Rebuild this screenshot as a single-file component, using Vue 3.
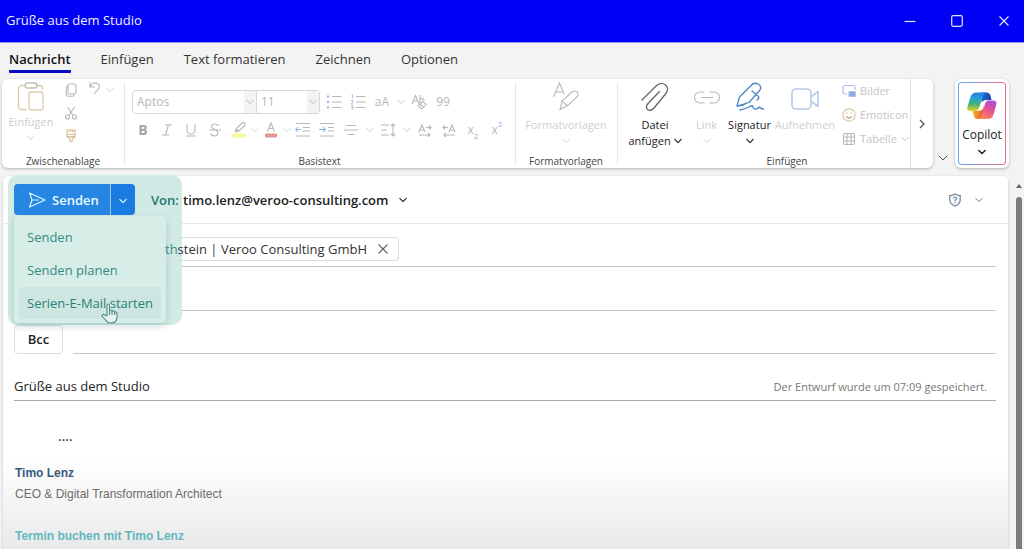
<script setup>
import { h, ref } from 'vue'

const Chevron = (props) =>
  h('svg', { width: props.size || 8, height: props.size || 8, viewBox: '0 0 10 10', fill: 'none', stroke: 'currentColor', 'stroke-width': props.weight || 1.2, 'stroke-linecap': 'round', 'stroke-linejoin': 'round', 'aria-hidden': 'true' }, [
    h('path', { d: 'M1 3l4 4 4-4' }),
  ])
Chevron.props = ['size', 'weight']

const tabs = ['Nachricht', 'Einfügen', 'Text formatieren', 'Zeichnen', 'Optionen']
const menu = ['Senden', 'Senden planen', 'Serien-E-Mail starten']
const active = ref('Nachricht')
const subject = ref('Grüße aus dem Studio')
</script>

<template>
  <div class="window">
    <header class="titlebar">
      <h1>Grüße aus dem Studio</h1>
      <div class="controls">
        <button aria-label="Minimieren"><svg width="12" height="12" viewBox="0 0 12 12"><path d="M0.5 6.5h11" /></svg></button>
        <button aria-label="Maximieren"><svg width="12" height="12" viewBox="0 0 12 12"><rect x="0.7" y="0.7" width="10.6" height="10.6" rx="1.5" /></svg></button>
        <button aria-label="Schließen"><svg width="12" height="12" viewBox="0 0 12 12"><path d="M1.5 1.5l9 9M10.5 1.5l-9 9" /></svg></button>
      </div>
    </header>

    <nav class="tabs">
      <button v-for="t in tabs" :key="t" :class="{ on: t === active }" @click="active = t">{{ t }}</button>
    </nav>

    <div class="ribbon-row">
      <div class="ribbon">
        <div class="groups">
          <section class="group clipboard">
            <div class="tools">
              <button class="big faded" disabled>
                <svg width="28" height="30" viewBox="0 0 28 30" fill="none" stroke="#dccfae" stroke-width="1.3">
                  <path d="M8.500 3.500H4.500a3 3 0 0 0-3 3v18a3 3 0 0 0 3 3H10M19.500 3.500h3a3 3 0 0 1 3 3V8" />
                  <rect x="8" y="1" width="12" height="5" rx="2.500" stroke="#bdbdbd" />
                  <rect x="12" y="10" width="14" height="18" rx="2.500" />
                </svg>
                <span>Einfügen</span>
                <Chevron />
              </button>
              <div class="minis">
                <button aria-label="Kopieren"><svg width="14" height="14" viewBox="0 0 14 14" class="line"><rect x="4" y="1" width="8" height="10" rx="1.500" /><path d="M4 3c-1.300 0-1.800.7-1.800 1.800V11c0 1.500.8 2.200 2.200 2.200h4c1.100 0 1.800-.7 1.800-2" /></svg></button>
                <button aria-label="Ausschneiden"><svg width="14" height="14" viewBox="0 0 14 14" class="line"><path d="M3.500 1l5.700 8.500M10.500 1L4.800 9.500" /><circle cx="3.500" cy="11" r="2" /><circle cx="10.500" cy="11" r="2" /></svg></button>
                <button aria-label="Format übertragen"><svg width="14" height="14" viewBox="0 0 14 14" fill="none" stroke="#d3bd92" stroke-width="1.200"><path d="M3 1h8v6.500H3zM3 5.500h8M6 1v2M8.500 1v2.500M3 7.500q0 1.500 2.800 1.500v3q1.200 1.600 2.400 0V9q2.800 0 2.800-1.500" /></svg></button>
              </div>
              <div class="undo">
                <button aria-label="Rückgängig"><svg width="14" height="14" viewBox="0 0 14 14" class="line"><path d="M2 1v5h5M2 6c2-4 5-5 7.500-3.500s2.500 4.500.5 6L6 13" /></svg></button>
                <Chevron />
              </div>
            </div>
            <h2>Zwischenablage</h2>
          </section>

          <section class="group basic">
            <div class="rows">
              <div class="row">
                <div class="combo">
                  <select aria-label="Schriftart"><option>Aptos</option></select><span class="arrow"><Chevron /></span>
                </div>
                <div class="combo size">
                  <select aria-label="Schriftgrad"><option>11</option></select><span class="arrow"><Chevron /></span>
                </div>
                <button class="t first" aria-label="Aufzählung"><svg width="16" height="16" viewBox="0 0 16 16" class="line"><path d="M6 2.500h9.500M6 8h9.500M6 13.500h9.500" /><path d="M1 2.500h2M1 8h2M1 13.500h2" stroke="#8fb2dc" stroke-width="2" /></svg></button>
                <button class="t" aria-label="Nummerierung"><svg width="16" height="16" viewBox="0 0 16 16" class="line"><path d="M6 2.500h9.500M6 8h9.500M6 13.500h9.500" /><path d="M1.500 1.500l1-1v4M1 6.500h2v1.500L1 10h2M1 12h2v3H1M1.500 13.500H3" stroke="#a5c0e2" stroke-width=".9" /></svg></button>
                <button class="t glyph">aA</button>
                <i class="chev wide"><Chevron /></i>
                <button class="t" aria-label="Formatierung löschen"><svg width="16" height="16" viewBox="0 0 16 16" class="line"><path d="M1 10l3.500-8.500L8 10M2.200 7h4.600M9 1v8M9 5.500c2-2 4.500-.7 4 1.500" /><path d="M7.500 11.500l4-4 3.500 3-3.500 4H9.500zM9 10l3.500 3" /></svg></button>
                <button class="t glyph">99</button>
              </div>
              <div class="row">
                <button class="t glyph bold">B</button>
                <button class="t" aria-label="Kursiv"><svg width="12" height="12" viewBox="0 0 12 12" class="line"><path d="M4 1h7M1 11h7M7.500 1l-3 10" /></svg></button>
                <button class="t" aria-label="Unterstrichen"><svg width="12" height="14" viewBox="0 0 12 14" class="line"><path d="M2 1v6a4 4 0 0 0 8 0V1M1 13h10" /></svg></button>
                <button class="t" aria-label="Durchgestrichen"><svg width="12" height="14" viewBox="0 0 12 14" class="line"><path d="M9.500 3C8-.2 2.800.8 2.500 3.500 2.500 6 6 6 8 8c2 2 .5 5-2.500 5-2 0-3.300-1-3.800-2.500M0 7h12" /></svg></button>
                <button class="t" aria-label="Texthervorhebung"><svg width="16" height="16" viewBox="0 0 16 16" class="line"><rect x="1" y="11.500" width="14" height="4" fill="#fbf79b" stroke="none" /><path d="M4 10l1-3 6-6q1.500-1 2.500 0t0 2.500l-6 6-3.500.5M5 7l3 2.500" /></svg></button>
                <i class="chev"><Chevron /></i>
                <button class="t" aria-label="Schriftfarbe"><svg width="14" height="16" viewBox="0 0 14 16" class="line"><rect x="1" y="11.500" width="12" height="4" rx="1" fill="#dd9896" stroke="none" /><path d="M3.500 9.500L7 1l3.500 8.500M4.800 6.500h4.400" /></svg></button>
                <i class="chev"><Chevron /></i>
                <button class="t" aria-label="Einzug verkleinern"><svg width="16" height="16" viewBox="0 0 16 16" class="line"><path d="M1 1.500h14M8 5.500h7M8 9h7M1 14h14" /><path d="M6 7.500H1M3 5L.7 7.500 3 10" stroke="#8fb2dc" /></svg></button>
                <button class="t" aria-label="Einzug vergrößern"><svg width="16" height="16" viewBox="0 0 16 16" class="line"><path d="M1 1.500h14M9 5.500h6M9 9h6M1 14h14" /><path d="M0 7.500h6M4 5l2.300 2.500L4 10" stroke="#8fb2dc" /></svg></button>
                <button class="t" aria-label="Ausrichtung"><svg width="14" height="14" viewBox="0 0 14 14" class="line"><path d="M2 2.500h10M0 7h14M3.500 11.500h7" /></svg></button>
                <i class="chev wide"><Chevron /></i>
                <button class="t" aria-label="Zeilenabstand"><svg width="16" height="16" viewBox="0 0 16 16" class="line"><path d="M1 3h8M1 8h6M1 13h8M13 2v12M11 4l2-2 2 2M11 12l2 2 2-2" /></svg></button>
                <i class="chev wide"><Chevron /></i>
                <button class="t" aria-label="Von links nach rechts"><svg width="14" height="14" viewBox="0 0 14 14" class="line"><path d="M1 9l3-7 3 7M2 7h4M8 4.500h5M11 2.500l2 2-2 2M1 12h11M10 10l2 2-2 2" /></svg></button>
                <button class="t" aria-label="Von rechts nach links"><svg width="14" height="14" viewBox="0 0 14 14" class="line"><path d="M7 9l3-7 3 7M8 7h4M6 4.500H1M3 2.500l-2 2 2 2M13 12H2M4 10l-2 2 2 2" /></svg></button>
                <button class="t glyph">x<sub>2</sub></button>
                <button class="t glyph">x<sup>2</sup></button>
              </div>
            </div>
            <h2>Basistext</h2>
          </section>

          <section class="group styles">
            <div class="tools">
              <button class="big faded" disabled>
                <svg width="28" height="30" viewBox="0 0 28 30" class="line"><path d="M1.500 15L7.500 1l4.500 11M3.800 10h7M8 27.500l2-8.500 10-9q3-2 5 0t0 5l-10 9zM10 19l5 4.500" /></svg>
                <span>Formatvorlagen</span>
                <Chevron />
              </button>
            </div>
            <h2>Formatvorlagen</h2>
          </section>

          <section class="group insert">
            <div class="tools">
              <button class="big attach">
                <svg width="28" height="30" viewBox="0 0 28 30" fill="none" stroke="#666" stroke-width="1.300" stroke-linecap="round"><path d="M1 18L14.500 4.500c3-3 7-4 10-1.500s2.500 6 0 9L13 26c-2 2.500-5 3-6.500 1.500s-1.200-4 .5-6L18.500 9.500" /></svg>
                <span>Datei<br />anfügen <Chevron :weight="1.5" /></span>
              </button>
              <button class="big link faded" disabled>
                <svg width="28" height="30" viewBox="0 0 28 30" class="line"><path d="M11.500 10H7a5.500 5.500 0 0 0 0 11h4.500M16.500 10H21a5.500 5.500 0 0 1 0 11h-4.500M8 15.500h12" /></svg>
                <span>Link</span>
                <Chevron />
              </button>
              <button class="big sign">
                <svg width="28" height="30" viewBox="0 0 28 30" fill="none" stroke="#4a83c8" stroke-width="1.300" stroke-linecap="round" stroke-linejoin="round"><path d="M1 24l2.500-9L15 3.500q3-3.500 7-1.500t2 6L13 20.500zM1 24q6 0 9-3M16 9l6 5q2 2-1 4M4 28q5-1 9-3 4-2.500 4 0t3 2q2.500-.7 3.500-2 1.500 2 4 2" /></svg>
                <span>Signatur</span>
                <Chevron :weight="1.5" />
              </button>
              <button class="big record faded" disabled>
                <svg width="28" height="30" viewBox="0 0 28 30" fill="none" stroke="#b5cbea" stroke-width="1.600" stroke-linejoin="round"><rect x="1" y="7" width="19" height="20" rx="4" /><path d="M20.500 14.500L27 9.500v15l-6.500-5" /></svg>
                <span>Aufnehmen</span>
              </button>
              <div class="list">
                <button disabled><svg width="14" height="14" viewBox="0 0 14 14" fill="none" stroke="#a8c0e8" stroke-width="1.200"><path d="M5 10H3a2 2 0 0 1-2-2V3.500a2 2 0 0 1 2-2h8a2 2 0 0 1 2 2V6" /><rect x="7" y="7.500" width="6.500" height="5" rx="1" fill="#8caee3" /></svg>Bilder</button>
                <button disabled><svg width="14" height="14" viewBox="0 0 14 14" fill="none" stroke="#d9c9a0" stroke-width="1.200"><circle cx="7" cy="7" r="6.200" /><path d="M4 8.500q3 3 6 0M4.800 4.500v1M9.200 4.500v1" stroke="#b9a987" /></svg>Emoticon</button>
                <button disabled><svg width="14" height="14" viewBox="0 0 14 14" class="line"><rect x="1.500" y="1.500" width="11" height="11" rx="1.500" /><path d="M5 1.500v11M9 1.500v11M1.500 5h11M1.500 9h11" /></svg>Tabelle <Chevron /></button>
              </div>
            </div>
            <h2>Einfügen</h2>
          </section>
        </div>
        <button class="more" aria-label="Weitere Befehle"><svg width="8" height="12" viewBox="0 0 8 12" fill="none" stroke="#555" stroke-width="1.300"><path d="M2 2l4 4-4 4" /></svg></button>
      </div>
      <button class="collapse" aria-label="Menüband einklappen"><Chevron :size="10" :weight="1" /></button>
      <div class="copilot-card">
        <button class="copilot">
          <svg width="32" height="30" viewBox="0 0 32 30" aria-hidden="true">
            <defs>
              <linearGradient id="cpA" x1="0" y1="0" x2="0" y2="1"><stop offset="0" stop-color="#2a7fe0" /><stop offset=".3" stop-color="#239fd8" /><stop offset=".6" stop-color="#3cb27e" /><stop offset="1" stop-color="#e5cf22" /></linearGradient>
              <linearGradient id="cpB" x1="0.800" y1="0" x2="0.300" y2="1"><stop offset="0" stop-color="#a34de8" /><stop offset=".5" stop-color="#e8518f" /><stop offset="1" stop-color="#fb8b58" /></linearGradient>
              <linearGradient id="cpC" x1="0" y1="0" x2="1" y2="0.300"><stop offset="0" stop-color="#1b7de0" /><stop offset="1" stop-color="#1a3fae" /></linearGradient>
              <linearGradient id="cpD" x1="0" y1="0" x2="1" y2="0"><stop offset="0" stop-color="#f2b72c" /><stop offset="1" stop-color="#ee4b3a" /></linearGradient>
            </defs>
            <path d="M14 1.500h7q2.500 0 3.300 2.500L25.500 9H20q-3 0-4 3z" fill="url(#cpC)" />
            <path d="M6.500 20h6q3 0 4-3l1.500-4-.5 12q-1 3-3.500 3h-3q-2.300 0-3-2.500z" fill="url(#cpD)" />
            <path d="M10 1.500h10q-2.200.4-3 3.200L13.500 16q-1.200 4-4.500 4H4.500q-4.200 0-3-4.500L4.500 6Q6 1.500 10 1.500z" fill="url(#cpA)" />
            <path d="M22.500 9.500H27q4.500 0 3.200 4.500l-2.700 9.500q-1.500 4.500-5.500 4.500H12.500q2.500-.4 3.300-3.200L18.800 13.500q1.200-4 3.700-4z" fill="url(#cpB)" />
            <path d="M17.500 10.500q-2 0-2.700 2.200l-2 6.500h1.700q2 0 2.700-2.200l2-6.500z" fill="#fff" />
          </svg>
          <span>Copilot</span>
          <Chevron :weight="1.8" />
        </button>
      </div>
    </div>

    <div class="workspace">
      <main class="mail">
        <div class="sendbar">
          <div class="split">
            <button class="send"><svg width="18" height="16" viewBox="0 0 18 16" fill="none" stroke="#d9f4ff" stroke-width="1.200" stroke-linejoin="round"><path d="M1.500 1L17 8 1.500 15 4 8zM4 8h7" /></svg>Senden</button>
            <button class="drop" aria-label="Sendeoptionen"><Chevron :weight="1.4" /></button>
          </div>
          <span class="von">Von:</span>
          <button class="from">timo.lenz@veroo-consulting.com <Chevron :weight="1.4" /></button>
          <button class="shield" aria-label="Schutz"><svg width="12" height="14" viewBox="0 0 12 14" fill="none" stroke="#6f7b87" stroke-width="1.200"><path d="M6 1Q8.500 2.600 11.200 2.600V7q0 4-5.200 6Q.8 11 .8 7V2.600Q3.500 2.600 6 1z" /><path d="M4.300 5.500Q4.500 4 6 4t1.700 1.500Q7.600 6.500 6 7.200V8.300M6 9.300v1.200" stroke="#4c86bd" /></svg></button>
          <button class="options" aria-label="Weitere Optionen"><Chevron /></button>

          <div class="highlight">
            <div class="menu" role="menu">
              <button v-for="(m, i) in menu" :key="m" role="menuitem" :class="{ hover: i === 2 }">{{ m }}</button>
            </div>
            <svg class="pointer" width="18" height="21" viewBox="0 0 18 21" fill="#e6f4f1" stroke="#4c8d87" stroke-width="1.100" stroke-linejoin="round"><path d="M6 13V2.500Q6 1 7.200 1t1.300 1.500V8.500Q8.700 7 9.800 7.200t1.200 1.500Q11.300 7.600 12.400 7.900t1.100 1.500Q13.800 8.600 14.900 9t1.100 1.800V14q0 6-6 6-3.500 0-5-2.500L1.200 13.200Q.6 12 1.700 11.500t2.300.5z" /><path d="M8.500 8.500V12M11 9v3M13.500 9.500V12" /></svg>
          </div>
        </div>

        <div class="field to">
          <div class="chip"><span><em>th</em>stein | Veroo Consulting GmbH</span><button aria-label="Empfänger entfernen"><svg width="12" height="12" viewBox="0 0 12 12" stroke="#666" stroke-width="1.100"><path d="M1.500 1.500l9 9M10.500 1.500l-9 9" /></svg></button></div>
          <input aria-label="An" />
        </div>
        <div class="field"><input aria-label="Cc" /></div>
        <div class="field bcc">
          <button>Bcc</button>
          <input aria-label="Bcc" />
        </div>
        <div class="subject">
          <input v-model="subject" aria-label="Betreff" />
          <span>Der Entwurf wurde um 07:09 gespeichert.</span>
        </div>
        <div class="body">
          <p class="dots">....</p>
          <p class="name">Timo Lenz</p>
          <p class="role">CEO &amp; Digital Transformation Architect</p>
          <a href="#termin">Termin buchen mit Timo Lenz</a>
        </div>
      </main>
      <div class="scroll">
        <svg width="6" height="4" viewBox="0 0 6 4" fill="#666"><path d="M0 4l3-4 3 4z" /></svg>
        <div class="thumb"></div>
      </div>
    </div>
  </div>
</template>

<style>
body { background: #f3f3f3; }
</style>

<style scoped>
* { box-sizing: border-box; }
button, input, select { font: inherit; color: inherit; background: none; border: 0; padding: 0; margin: 0; border-radius: 0; outline: 0; }
button { cursor: pointer; white-space: nowrap; }
svg { flex: none; }
h1, h2, p { margin: 0; font-weight: 400; }
.line { fill: none; stroke: #b8b8b8; stroke-width: 1.1; }

.window { height: 100vh; display: flex; flex-direction: column; overflow: hidden; font: 13px/18px "Open Sans", "Noto Sans", sans-serif; color: #222; background: #f3f3f3; }
.titlebar { flex: none; height: 43px; display: flex; align-items: center; justify-content: space-between; padding: 0 0 2px 6px; background: #0000f5; border-bottom: 1px solid #8d8dfa; color: #f1f1ff; }
h1 { font-size: 13px; }
.controls { display: flex; gap: 7px; padding-top: 2px; }
.controls button { width: 40px; height: 38px; display: grid; place-items: center; }
.controls svg { fill: none; stroke: #e4e4ff; stroke-width: 1.2; }

.tabs { flex: none; display: flex; gap: 30px; height: 36px; padding: 7px 9px 0; color: #333; }
.tabs button { height: 23px; padding-bottom: 4px; border-bottom: 3px solid transparent; }
.tabs .on { font-weight: 600; color: #111; border-bottom-color: #0a0ac4; border-radius: 1px; }

.ribbon-row { flex: none; display: flex; padding: 0 15px 0 2px; height: 89px; }
.ribbon { flex: 1; min-width: 0; display: flex; background: #fff; border-radius: 6px; box-shadow: 0 1px 3px #0004; overflow: hidden; }
.groups { flex: 1; min-width: 0; display: flex; overflow: hidden; }
.group { flex: none; display: flex; flex-direction: column; position: relative; font-size: 12px; line-height: 16px; }
.group + .group::before { content: ""; position: absolute; left: 0; top: 3px; bottom: 3px; width: 1px; background: #e8e8e8; }
.group h2 { font-size: 10px; line-height: 13px; text-align: center; color: #444; }
.tools, .rows { flex: 1; }
.tools { display: flex; }
.clipboard { width: 122px; }
.basic { width: 391px; }
.styles { width: 102px; }
.insert { width: 340px; }
.big { display: flex; flex-direction: column; align-items: center; padding-top: 3px; font-size: 11px; color: #222; }
.big span { margin-top: 5px; }
.big > svg:last-child { margin-top: 4px; }
.faded { color: #ccc; }
.clipboard .big { width: 58px; }
.clipboard .big span { margin-top: 2px; }
.minis { display: flex; flex-direction: column; width: 22px; padding-top: 4px; gap: 9px; }
.minis button { height: 14px; display: grid; place-items: center; }
.undo { display: flex; gap: 4px; height: 22px; align-items: center; padding-left: 6px; color: #ccc; }
.rows { padding: 9px 0 0 7px; }
.row { display: flex; align-items: center; height: 28px; color: #b8b8b8; }
.combo { position: relative; display: flex; width: 125px; height: 24px; border: 1px solid #d8d8d8; border-radius: 4px 0 0 4px; margin-left: 1px; }
.combo.size { width: 63px; border-radius: 0 4px 4px 0; margin-left: 0; border-left: 0; }
.combo select { appearance: none; flex: 1; min-width: 0; padding-left: 4px; font-size: 12px; }
.combo .arrow { width: 12px; display: grid; place-items: center; background: #f3f3f3; pointer-events: none; }
.t { width: 24px; height: 24px; display: flex; align-items: center; justify-content: center; flex: none; }
.t.first { margin-left: 2px; }
.glyph { font-size: 12px; }
.bold { font-weight: 700; font-size: 14px; color: #a5a5a5; }
.glyph sub, .glyph sup { font-size: 8px; line-height: 8px; color: #8fb2dc; }
.glyph sub { align-self: flex-end; padding-bottom: 2px; }
.glyph sup { align-self: flex-start; padding-top: 2px; }
.chev { width: 8px; display: flex; justify-content: center; flex: none; color: #d4d4d4; }
.chev.wide { width: 13px; color: #c4c4c4; }
.styles .big { width: 102px; }
.insert .tools { padding-left: 8px; }
.attach { width: 60px; }
.link { width: 43px; }
.sign { width: 43px; }
.record { width: 68px; }
.insert .faded, .styles .faded { color: #cfcfcf; }
.list { display: flex; flex-direction: column; padding-left: 3px; font-size: 11px; }
.list button { display: flex; align-items: center; gap: 4px; height: 24px; color: #c4c4c4; }
.more { width: 23px; border-left: 1px solid #ddd; display: grid; place-items: center; }
.collapse { width: 20px; margin-right: 2px; display: flex; align-items: flex-end; justify-content: center; padding-bottom: 5px; color: #555; }
.copilot-card { width: 54px; padding: 3px; background: #fff; border-radius: 6px; box-shadow: 0 1px 3px #0004; display: flex; }
.copilot { flex: 1; display: flex; flex-direction: column; align-items: center; padding-top: 8px; border: 1px solid transparent; border-radius: 4px; background: linear-gradient(#fff, #fff) padding-box, linear-gradient(90deg, #63aef2, #a58ccf 50%, #e8707c) border-box; font-size: 12px; }
.copilot span { margin: 6px 0 5px; line-height: 16px; }

.workspace { flex: 1; min-height: 0; display: flex; padding: 8px 0 0 3px; }
.mail { flex: 1; min-width: 0; display: flex; flex-direction: column; border-radius: 6px 6px 0 0; background: linear-gradient(to top, #e9e9e9, #f3f3f3 40px, #fff 90px); box-shadow: 0 1px 3px #0003; }
.sendbar { position: relative; flex: none; display: flex; align-items: center; height: 48px; padding: 0 25px 0 11px; border-bottom: 1px solid #e8e8e8; }
.split { display: flex; height: 31px; position: relative; z-index: 4; color: #eafaff; border-radius: 4px; overflow: hidden; }
.send { display: flex; align-items: center; gap: 6px; width: 97px; padding-left: 14px; background: #2686e2; border-right: 1px solid #93c9f3; font-weight: 600; }
.drop { width: 24px; background: #1a7be0; }
.von { position: relative; z-index: 4; width: 32px; margin-left: 16px; color: #24786c; font-weight: 600; white-space: nowrap; }
.from { position: relative; z-index: 4; display: flex; align-items: center; gap: 11px; font-weight: 600; color: #222; }
.shield { margin-left: auto; display: flex; }
.options { margin-left: 14px; display: flex; color: #777; }
.highlight { position: absolute; z-index: 2; left: 5px; top: -1px; width: 174px; height: 150px; border-radius: 10px; background: #d1eae5; }
.menu { position: absolute; left: 6px; top: 41px; width: 152px; padding: 5px 5px 4px; display: flex; flex-direction: column; gap: 1px; background: #d7ede8; border-radius: 4px; box-shadow: 0 3px 7px #0b4b4433; color: #378a80; }
.menu button { height: 32px; padding-left: 8px; text-align: left; border-radius: 3px; }
.menu .hover { background: #cee6e1; color: #2b8177; }
.pointer { position: absolute; left: 93px; top: 128px; }

.field { flex: none; display: flex; align-items: center; height: 44px; margin: 0 12px 0 70px; border-bottom: 1px solid #c4c4c4; }
.field.to { height: 43px; }
.field input { flex: 1; min-width: 0; height: 24px; }
.chip { position: relative; z-index: 3; display: flex; align-items: center; gap: 10px; height: 24px; margin: 8px 0 0 92px; padding-right: 9px; border: 1px solid #ddd; border-left: 0; border-radius: 0 4px 4px 0; color: #333; }
.chip em { font-style: normal; color: #3b8b82; }
.chip button { display: flex; }
.bcc { height: 43px; margin-left: 11px; border: 0; gap: 10px; align-items: stretch; }
.bcc button { align-self: flex-end; width: 49px; height: 29px; padding-bottom: 2px; border: 1px solid #ddd; border-radius: 4px; font-weight: 600; }
.field.bcc input { height: auto; border-bottom: 1px solid #c4c4c4; }
.subject { flex: none; display: flex; align-items: flex-end; height: 47px; padding-bottom: 4px; margin: 0 12px 0 11px; border-bottom: 1px solid #aaa; }
.subject input { flex: 1; min-width: 0; height: 20px; }
.subject span { font-size: 11px; color: #777; padding-right: 9px; }
.body { flex: 1; padding: 25px 11px 0 12px; font: 12px/18px "Liberation Sans", Arial, sans-serif; }
.dots { padding-left: 43px; font: 14px/20px "Open Sans", "Noto Sans", sans-serif; }
.name { margin-top: 18px; font-weight: 700; color: #36597c; }
.role { margin-top: 3px; color: #6c6c6c; }
.body a { display: inline-block; margin-top: 24px; font-weight: 700; color: #64b7bf; text-decoration: none; }
.scroll { flex: none; width: 16px; display: flex; flex-direction: column; align-items: center; padding: 8px 0 0 5px; gap: 9px; }
.thumb { flex: 1; width: 6px; border-radius: 3px 3px 0 0; background: #7b7b7b; }
</style>
